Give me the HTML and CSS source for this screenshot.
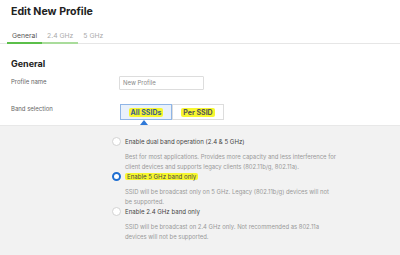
FILE: index.html
```html
<!DOCTYPE html>
<html>
<head>
<meta charset="utf-8">
<link rel="stylesheet" href="styles.css">
</head>
<body>
<div class="top">
  <h1 class="title">Edit New Profile</h1>
  <div class="tabs">
    <span class="tab active">General</span>
    <span class="tab second">2.4 GHz</span>
    <span class="tab">5 GHz</span>
  </div>
</div>
<div class="form">
  <h2 class="section">General</h2>
  <div class="row name-row">
    <span class="label">Profile name</span>
    <div class="input">New Profile</div>
  </div>
  <div class="row band-row">
    <span class="label">Band selection</span>
    <div class="seg">
      <div class="seg-btn on"><span class="hl">All SSIDs</span><span class="caret"></span></div>
      <div class="seg-btn"><span class="hl">Per SSID</span></div>
    </div>
  </div>
</div>
<div class="panel">
  <div class="opt">
    <span class="radio"></span>
    <div class="opt-text">
      <div class="opt-label">Enable dual band operation (2.4 &amp; 5 GHz)</div>
      <div class="opt-desc">Best for most applications. Provides more capacity and less interference for<br>client devices and supports legacy clients (802.11b/g, 802.11a).</div>
    </div>
  </div>
  <div class="opt">
    <span class="radio checked"></span>
    <div class="opt-text">
      <div class="opt-label"><span class="hl">Enable 5 GHz band only</span></div>
      <div class="opt-desc">SSID will be broadcast only on 5 GHz. Legacy (802.11b/g) devices will not<br>be supported.</div>
    </div>
  </div>
  <div class="opt">
    <span class="radio"></span>
    <div class="opt-text">
      <div class="opt-label">Enable 2.4 GHz band only</div>
      <div class="opt-desc">SSID will be broadcast on 2.4 GHz only. Not recommended as 802.11a<br>devices will not be supported.</div>
    </div>
  </div>
</div>
</body>
</html>
```

FILE: styles.css
```css
html, body {
  margin: 0;
  padding: 0;
  background: #fff;
  font-family: Inter, "Noto Sans", sans-serif;
  color: #333;
  width: 400px;
  height: 255px;
  overflow: hidden;
}
.top {
  padding: 3px 0 0 0;
}
.title {
  margin: 0 0 0 11px;
  font-size: 10.6px;
  font-weight: 700;
  color: #222;
  line-height: 18px;
}
.tabs {
  display: flex;
  margin-top: 9px;
  padding-left: 7px;
  border-bottom: 1px solid #e6e6e6;
  height: 13px;
}
.tab {
  font-size: 6.8px;
  color: #aaa;
  padding: 0 5px;
  line-height: 12px;
  border-bottom: 2px solid transparent;
  margin-bottom: -1px;
}
.tab.active {
  color: #555;
  border-bottom-color: #5bbf4a;
}
.tab.second {
  border-bottom-color: #a9dc9b;
}
.form {
  padding: 13px 0 5px 11px;
}
.section {
  margin: 0;
  font-size: 9px;
  font-weight: 700;
  color: #222;
  line-height: 14px;
}
.row {
  display: flex;
  align-items: center;
}
.label {
  width: 108px;
  font-size: 6px;
  color: #666;
  line-height: 8px;
}
.name-row {
  margin-top: 5px;
}
.name-row .label {
  margin-top: -3px;
}
.input {
  width: 80px;
  height: 12px;
  border: 1px solid #ddd;
  border-radius: 1px;
  font-size: 6px;
  color: #888;
  line-height: 12px;
  padding-left: 3px;
}
.band-row {
  margin-top: 14px;
  align-items: flex-start;
}
.band-row .label {
  margin-top: 1px;
}
.seg {
  display: flex;
  margin-left: 1px;
}
.seg-btn {
  position: relative;
  width: 50px;
  height: 14px;
  border: 1px solid #ddd;
  display: flex;
  align-items: center;
  justify-content: center;
  font-size: 7px;
  font-weight: 700;
  color: #555;
  background: #fff;
}
.seg-btn.on {
  background: #e9f1fb;
  border-color: #8fb5e6;
  color: #3b5f8a;
}
.hl {
  background: #f7f72e;
  padding: 0 2px;
  border-radius: 2px;
}
.caret {
  position: absolute;
  left: 19px;
  bottom: -6px;
  width: 0;
  height: 0;
  border-left: 4px solid transparent;
  border-right: 4px solid transparent;
  border-bottom: 5px solid #2f79d8;
}
.panel {
  background: #f2f2f2;
  border-top: 1px solid #e8e8e8;
  height: 140px;
  padding: 11px 0 0 112px;
  box-sizing: border-box;
}
.opt {
  display: flex;
  align-items: flex-start;
}
.radio {
  width: 9px;
  height: 9px;
  border-radius: 50%;
  border: 1px solid #d3d3d3;
  background: #fff;
  margin-top: 0;
  box-sizing: border-box;
  flex: none;
}
.radio.checked {
  border: 2.5px solid #1f6fd1;
}
.opt-text {
  margin-left: 4px;
}
.opt-label {
  font-size: 6.1px;
  color: #444;
  line-height: 10px;
}
.opt-desc {
  font-size: 5.9px;
  color: #999;
  line-height: 10px;
  margin-top: 5px;
}
```
